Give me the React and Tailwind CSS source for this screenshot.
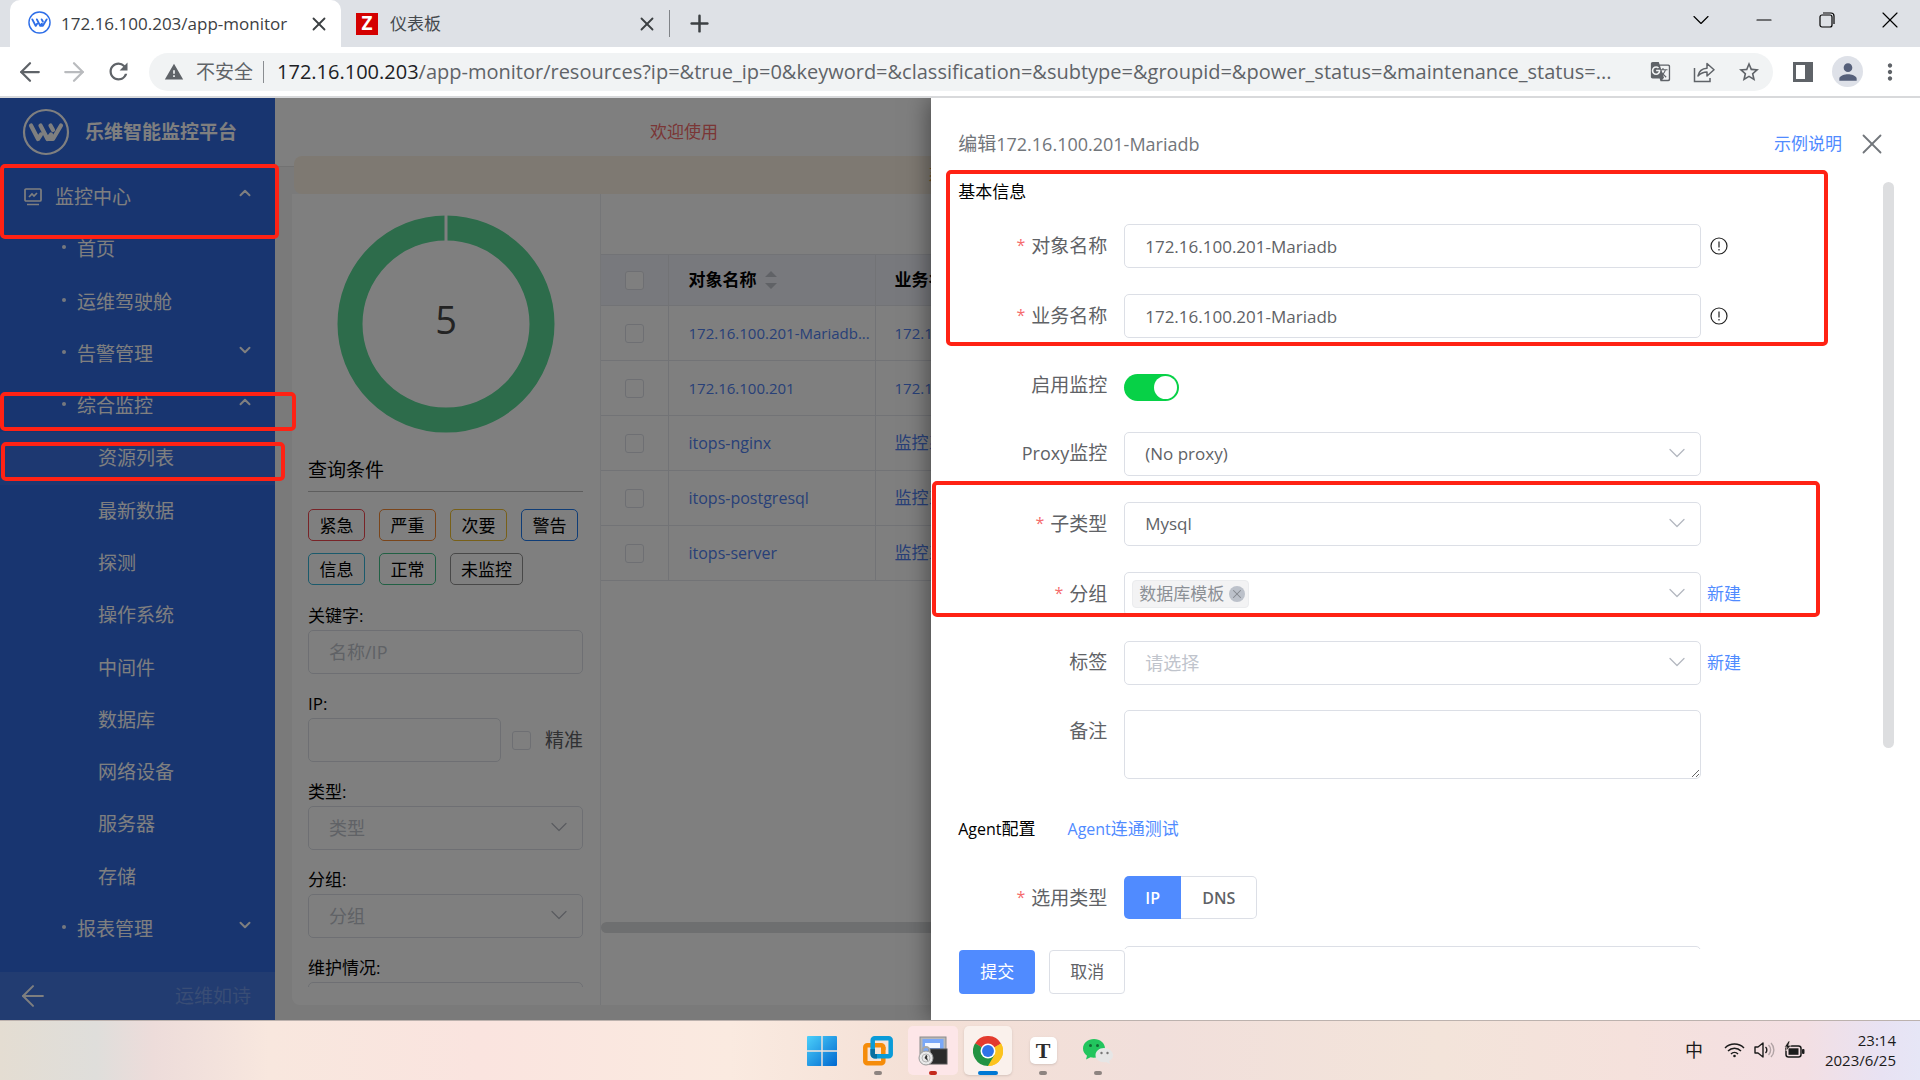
import React from "react";
import { ChevronDown, ChevronUp, X, Plus, ArrowLeft, ArrowRight, Minus } from "lucide-react";
import { MdRefresh, MdWarning, MdStarBorder, MdPerson, MdMoreVert, MdGTranslate } from "react-icons/md";

function LogoMark({ className, ring, stroke }) {
  return (
    <svg viewBox="0 0 48 48" fill="none" stroke="currentColor" className={className} aria-hidden="true">
      <circle cx="24" cy="24" r="22" strokeWidth={ring} />
      <path d="M9 17.500 L16 31 L19 26.500 M18.500 17.500 L25.500 31 L29 26.500 M28.500 17.500 L31 22 M26.500 31 L31 31 L39 17.500" strokeWidth={stroke} strokeLinecap="round" strokeLinejoin="round" />
    </svg>
  );
}

function TabStrip() {
  const win = "flex w-[28px] justify-center";
  return (
    <div className="flex h-[47px] shrink-0 items-stretch bg-[#dee1e6] pl-[10px]">
      <div className="flex w-[331px] items-center rounded-t-[10px] bg-white pl-[18px] pr-[11px]">
        <LogoMark className="mt-[-2px] size-[23px] text-[#2f6fe8]" ring={3} stroke={4} />
        <span className="ml-[10px] flex-1 truncate text-[17px] leading-[24px] text-[#3c4043]">172.16.100.203/app-monitor</span>
        <button aria-label="关闭标签页" className="text-[#3c4043]"><X size={22} strokeWidth={2} /></button>
      </div>
      <div className="flex w-[328px] items-center pl-[15px] pr-[11px]">
        <span className="flex size-[22px] items-center justify-center bg-[#d40000] text-[19px] font-bold leading-none text-white">Z</span>
        <span className="ml-[12px] flex-1 text-[17px] leading-[24px] text-[#45494d]">仪表板</span>
        <button aria-label="关闭标签页" className="text-[#3c4043]"><X size={22} strokeWidth={2} /></button>
      </div>
      <span className="my-[10px] w-px bg-[#808388]" />
      <button aria-label="新标签页" className="ml-[16px] text-[#3c4043]"><Plus size={27} strokeWidth={2.2} /></button>
      <div className="ml-auto mr-[16px] flex items-center gap-[35px] pb-[7px] text-black">
        <button aria-label="搜索标签页" className={win}><ChevronDown size={28} strokeWidth={1} /></button>
        <button aria-label="最小化" className={win}><Minus size={24} strokeWidth={1.200} /></button>
        <button aria-label="还原" className={win}>
          <svg width="18" height="18" viewBox="0 0 18 18" fill="none" stroke="currentColor" strokeWidth="1.2"><rect x="2" y="4" width="12" height="12" rx="2" /><path d="M5 2 H13 a3 3 0 0 1 3 3 V13" /></svg>
        </button>
        <button aria-label="关闭" className={win}><X size={28} strokeWidth={1} /></button>
      </div>
    </div>
  );
}

function Toolbar() {
  return (
    <div className="flex h-[51px] shrink-0 items-center border-b-2 border-[#d8d9db] bg-white pl-[15px] pr-[17px] text-[#5f6368]">
      <button aria-label="后退"><ArrowLeft size={30} strokeWidth={1.800} /></button>
      <button aria-label="前进" className="ml-[14px] text-[#b9bbbe]"><ArrowRight size={30} strokeWidth={1.800} /></button>
      <button aria-label="重新加载" className="ml-[16px]"><MdRefresh size={27} /></button>
      <div className="ml-[17px] flex h-[38px] min-w-0 flex-1 items-center rounded-full bg-[#f1f3f4] pl-[15px] pr-[12px]">
        <MdWarning size={20} className="shrink-0" />
        <span className="ml-[12px] shrink-0 text-[19px] leading-[28px]">不安全</span>
        <span className="ml-[10px] h-[22px] w-px shrink-0 bg-[#8a8d91]" />
        <div className="ml-[13px] min-w-0 flex-1 overflow-hidden whitespace-nowrap text-[20px] leading-[28px]">
          <span className="text-[#202124]">172.16.100.203</span>/app-monitor/resources?ip=&amp;true_ip=0&amp;keyword=&amp;classification=&amp;subtype=&amp;groupid=&amp;power_status=&amp;maintenance_status=...
        </div>
        <div className="ml-[20px] flex shrink-0 items-center gap-[22px]">
          <button aria-label="翻译此页"><MdGTranslate size={21} /></button>
          <button aria-label="共享">
            <svg width="22" height="22" viewBox="0 0 22 22" fill="none" stroke="currentColor" strokeWidth="1.5"><path d="M1.500 7 V20.500 H17 V17" /><path d="M5 15 C6 10 9 7.500 14 7.300 V2.500 L21 8.800 L14 15 V11 C10 11 7.500 12.500 5 15 Z" strokeLinejoin="round" /></svg>
          </button>
          <button aria-label="加入书签"><MdStarBorder size={24} /></button>
        </div>
      </div>
      <button aria-label="侧边栏" className="ml-[20px]">
        <svg width="20" height="20" viewBox="0 0 20 20"><rect width="20" height="20" fill="currentColor" /><rect x="3" y="3" width="9" height="14" fill="#fff" /></svg>
      </button>
      <button aria-label="用户" className="ml-[19px] flex size-[31px] items-center justify-center rounded-full bg-[#dee1e8] text-[#56607a]"><MdPerson size={26} /></button>
      <button aria-label="更多" className="ml-[14px]"><MdMoreVert size={26} /></button>
    </div>
  );
}

const NAV = [
  { t: "首页", l: 1 },
  { t: "运维驾驶舱", l: 1 },
  { t: "告警管理", l: 1, c: "down" },
  { t: "综合监控", l: 1, c: "up" },
  { t: "资源列表", l: 2, active: true },
  { t: "最新数据", l: 2 },
  { t: "探测", l: 2 },
  { t: "操作系统", l: 2 },
  { t: "中间件", l: 2 },
  { t: "数据库", l: 2 },
  { t: "网络设备", l: 2 },
  { t: "服务器", l: 2 },
  { t: "存储", l: 2 },
  { t: "报表管理", l: 1, c: "down" },
];

function Sidebar() {
  return (
    <aside className="flex w-[275px] shrink-0 flex-col bg-[#306ae0] text-white">
      <div className="flex h-[73px] items-center pb-[5px] pl-[22px]">
        <LogoMark className="size-[48px]" ring={2.2} stroke={4.2} />
        <span className="ml-[15px] text-[19px] font-bold leading-[28px]">乐维智能监控平台</span>
      </div>
      <nav className="flex flex-1 flex-col pb-[17px] text-[19px] leading-[28px]">
        <a href="#monitor" className="flex flex-1 items-center pl-[24px] pr-[21px]">
          <svg width="18" height="18" viewBox="0 0 18 18" fill="none" stroke="currentColor" strokeWidth="1.700"><rect x="1" y="1" width="16" height="12" rx="1" /><path d="M5 9 L8 6 L10 8 L13 5 M3 16.500 H15" /></svg>
          <span className="ml-[13px] flex-1">监控中心</span>
          <ChevronUp size={18} strokeWidth={2.600} className="mb-[8px]" />
        </a>
        {NAV.map((n) => (
          <a key={n.t} href={"#" + n.t} className={"flex flex-1 items-center pr-[21px] " + (n.l === 1 ? "pl-[62px]" : "pl-[98px]") + (n.active ? " bg-white/5" : "")}>
            {n.l === 1 && <span className="mb-[4px] mr-[11px] size-[4px] rounded-full bg-white/90" />}
            <span className="flex-1">{n.t}</span>
            {n.c === "up" && <ChevronUp size={18} strokeWidth={2.600} className="mb-[8px]" />}
            {n.c === "down" && <ChevronDown size={18} strokeWidth={2.600} className="mb-[8px]" />}
          </a>
        ))}
      </nav>
      <div className="flex h-[48px] items-center justify-between bg-white/10 pl-[16px] pr-[24px]">
        <button aria-label="收起菜单"><ArrowLeft size={34} strokeWidth={1.400} /></button>
        <span className="text-[19px] leading-[28px] text-white/25">运维如诗</span>
      </div>
    </aside>
  );
}

const LEVELS = [
  ["紧急", "border-[#f04850]"],
  ["严重", "border-[#f58a35]"],
  ["次要", "border-[#f0c030]"],
  ["警告", "border-[#1f7bef]"],
  ["信息", "border-[#35b5d8]"],
  ["正常", "border-[#42c088]"],
  ["未监控", "border-[#909090]"],
];

const FIELD = "h-[44px] w-full appearance-none rounded-[5px] border border-[#dcdfe6] bg-white pl-[20px] pr-[20px] placeholder:text-[#c0c4cc] outline-none";
const TICK = "size-[19px] shrink-0 appearance-none rounded-[3px] border border-[#dcdfe6] bg-white";

const Caret = () => <ChevronDown size={28} strokeWidth={1.100} className="pointer-events-none absolute right-[10px] top-[7px] text-[#b4b8c0]" />;

function FilterSelect({ id, label }) {
  return (
    <div className="mb-[16px]">
      <label htmlFor={id} className="block h-[28px] text-[17px] leading-[28px]">{label}:</label>
      <div className="relative">
        <select id={id} className={FIELD + " text-[18px] text-[#c0c4cc]"}><option>{label}</option></select>
        <Caret />
      </div>
    </div>
  );
}

function FilterPane() {
  return (
    <div className="flex w-[309px] shrink-0 flex-col border-r border-[#ebedf0] pb-[18px] pl-[16px] pr-[17px] text-black">
      <div className="min-h-0 flex-1 overflow-hidden">
        <svg viewBox="0 0 218 218" className="mx-auto mt-[21px] block size-[218px]">
          <circle cx="109" cy="109" r="96" fill="none" stroke="#5ad896" strokeWidth="25" />
          <path d="M109 0 V26" stroke="#fff" strokeWidth="3" />
          <text x="109" y="119" textAnchor="middle" fontSize="38" fill="#464646">5</text>
        </svg>
        <h2 className="mt-[22px] border-b border-[#bcbcbc] pb-[6px] text-[19px] leading-[30px]">查询条件</h2>
        <div className="mt-[17px] flex flex-wrap gap-x-[14px] gap-y-[12px]">
          {LEVELS.map(([t, c]) => (
            <button key={t} className={"h-[32px] min-w-[57px] rounded-[5px] border px-[10px] text-[17px] leading-[29px] " + c}>{t}</button>
          ))}
        </div>
        <div className="mb-[16px] mt-[17px]">
          <label htmlFor="kw" className="block h-[28px] text-[17px] leading-[28px]">关键字:</label>
          <input id="kw" placeholder="名称/IP" className={FIELD + " text-[18px]"} />
        </div>
        <div className="mb-[16px]">
          <label htmlFor="ip" className="block h-[28px] text-[17px] leading-[28px]">IP:</label>
          <div className="flex items-center">
            <input id="ip" className={FIELD + " min-w-0 flex-1"} />
            <input id="exact" type="checkbox" className={TICK + " ml-[11px]"} />
            <label htmlFor="exact" className="ml-[14px] shrink-0 text-[19px] leading-[28px] text-[#606266]">精准</label>
          </div>
        </div>
        <FilterSelect id="type" label="类型" />
        <FilterSelect id="fgroup" label="分组" />
        <FilterSelect id="maint" label="维护情况" />
      </div>
    </div>
  );
}

const ROWS = [
  ["172.16.100.201-Mariadb...", "172.16.100.201"],
  ["172.16.100.201", "172.16.100.201"],
  ["itops-nginx", "监控系统"],
  ["itops-postgresql", "监控系统"],
  ["itops-server", "监控系统"],
];

function ResourceTable() {
  return (
    <div className="flex min-w-0 flex-1 flex-col overflow-hidden pt-[60px]">
      <table className="w-full table-fixed border-collapse text-left">
        <colgroup><col className="w-[67px]" /><col className="w-[207px]" /><col /></colgroup>
        <thead>
          <tr className="h-[51px] border-y border-[#e4e6ec] bg-[#f1f3fb] text-[17px] leading-[24px] text-black">
            <th className="border-r border-[#e4e6ec] pl-[24px]"><input type="checkbox" aria-label="全选" className={TICK + " block"} /></th>
            <th className="border-r border-[#e4e6ec] pl-[20px] font-bold">
              <span className="flex items-center gap-[8px]">对象名称
                <svg width="12" height="20" viewBox="0 0 12 20" fill="#c0c4cc"><path d="M0 7 L6 1 L12 7 Z M0 13 L6 19 L12 13 Z" /></svg>
              </span>
            </th>
            <th className="overflow-hidden whitespace-nowrap pl-[19px] font-bold">业务名称</th>
          </tr>
        </thead>
        <tbody>
          {ROWS.map(([a, b]) => (
            <tr key={a} className="h-[55px] border-b border-[#e4e6ec] font-medium leading-[24px] text-[#5081f0]">
              <td className="border-r border-[#e4e6ec] pl-[24px]"><input type="checkbox" aria-label={a} className={TICK + " block"} /></td>
              <td className={"overflow-hidden whitespace-nowrap border-r border-[#e4e6ec] pl-[20px]" + (b === "监控系统" ? " text-[16px]" : " text-[15px]")}><a href="#r">{a}</a></td>
              <td className={"overflow-hidden whitespace-nowrap pl-[19px]" + (b === "监控系统" ? " text-[17px] font-normal" : " text-[15px]")}><a href="#b">{b}</a></td>
            </tr>
          ))}
        </tbody>
      </table>
      <div className="mb-[72px] mt-auto h-[11px] rounded-full bg-[#dddee0]" />
    </div>
  );
}

function Row({ id, label, required, children, aside, latin }) {
  return (
    <div className="grid grid-cols-[149px_1fr_200px] items-start">
      <label htmlFor={id} className="text-right text-[19px] leading-[43px] text-[#606266]">
        {required && <span className="mr-[6px] align-[2px] text-[16px] text-[#f56c6c]">*</span>}
        {latin && <span className="text-[18px]">{latin}</span>}
        {label}
      </label>
      <div className="relative ml-[17px]">{children}</div>
      <div className="flex h-[44px] items-center">{aside}</div>
    </div>
  );
}

function Info() {
  return (
    <svg width="18" height="18" viewBox="0 0 18 18" fill="none" stroke="#222" strokeWidth="1.200" className="ml-[9px]"><circle cx="9" cy="9" r="8" /><path d="M9 4.500 V10.500 M9 12 V13.500" /></svg>
  );
}

const NewLink = () => <a href="#new" className="ml-[6px] text-[17px] leading-[24px] text-[#508bff]">新建</a>;

function Drawer() {
  const red = "pointer-events-none absolute rounded-[5px] border-4 border-[#ff2214]";
  return (
    <section className="absolute inset-y-0 right-0 flex w-[51.5%] flex-col bg-white shadow-[0_0_24px_rgba(0,0,0,0.5)]">
      <header className="flex h-[72px] shrink-0 items-center pl-[27px] pr-[31px] pt-[20px]">
        <h1 className="text-[19px] leading-[28px] text-[#72767b]">编辑<span className="text-[18px]">172.16.100.201-Mariadb</span></h1>
        <a href="#help" className="ml-auto text-[17px] leading-[28px] text-[#508bff]">示例说明</a>
        <button aria-label="关闭抽屉" className="ml-[13px] text-[#72767b]"><X size={34} strokeWidth={1.300} /></button>
      </header>
      <div className="relative min-h-0 flex-1 overflow-hidden pl-[27px] pr-[19px]">
        <h2 className="mt-[8px] text-[17px] leading-[28px] text-black">基本信息</h2>
        <div className="mt-[18px] flex flex-col gap-[26px]">
          <Row id="oname" label="对象名称" required aside={<Info />}><input id="oname" defaultValue="172.16.100.201-Mariadb" className={FIELD + " text-[17px] text-[#606266]"} /></Row>
          <Row id="bname" label="业务名称" required aside={<Info />}><input id="bname" defaultValue="172.16.100.201-Mariadb" className={FIELD + " text-[17px] text-[#606266]"} /></Row>
          <div className="h-[42px]">
            <Row id="on" label="启用监控">
              <input id="on" type="checkbox" role="switch" defaultChecked className="mt-[10px] block h-[27px] w-[55px] appearance-none rounded-full bg-[#07d147] before:ml-[30px] before:mt-[2px] before:block before:size-[23px] before:rounded-full before:bg-white" />
            </Row>
          </div>
          <Row id="proxy" label="监控" latin="Proxy"><select id="proxy" className={FIELD + " text-[17px] text-[#606266]"}><option>(No proxy)</option></select><Caret /></Row>
          <Row id="sub" label="子类型" required><select id="sub" className={FIELD + " text-[17px] text-[#606266]"}><option>Mysql</option></select><Caret /></Row>
          <div className="flex flex-col gap-[25px]">
            <Row id="grp" label="分组" required aside={<NewLink />}>
              <div id="grp" role="combobox" aria-expanded="false" aria-controls="grp" className="flex h-[44px] items-center rounded-[5px] border border-[#dcdfe6] pl-[7px]">
                <span className="flex h-[28px] items-center gap-[5px] rounded-[4px] border border-[#ebecee] bg-[#f3f3f4] pl-[6px] pr-[3px] text-[17px] leading-[24px] text-[#8c9096]">
                  数据库模板
                  <button aria-label="移除" className="flex size-[16px] items-center justify-center rounded-full bg-[#bcc1ca] text-[#84888e]"><X size={14} strokeWidth={1.800} /></button>
                </span>
              </div>
              <Caret />
            </Row>
            <Row id="tag" label="标签" aside={<NewLink />}><select id="tag" className={FIELD + " text-[18px] text-[#c0c4cc]"}><option>请选择</option></select><Caret /></Row>
            <Row id="memo" label="备注"><textarea id="memo" className="block h-[69px] w-full rounded-[5px] border border-[#dcdfe6] bg-white" /></Row>
          </div>
        </div>
        <div className="mt-[36px] flex gap-[32px] text-[16px] font-medium leading-[28px]">
          <h2 className="text-black">Agent<span className="text-[17px] font-normal">配置</span></h2>
          <a href="#test" className="text-[#508bff]">Agent<span className="text-[17px] font-normal">连通测试</span></a>
        </div>
        <div className="mt-[33px] flex flex-col gap-[26px]">
          <Row id="kind" label="选用类型" required>
            <div id="kind" className="flex h-[43px] text-[16px] font-semibold">
              <button className="w-[57px] rounded-l-[5px] bg-[#508bff] text-white">IP</button>
              <button className="w-[76px] rounded-r-[5px] border border-l-0 border-[#dcdfe6] text-[#606266]">DNS</button>
            </div>
          </Row>
          <Row id="addr"><input id="addr" aria-label="IP" className={FIELD} /></Row>
        </div>
        <div className="absolute right-[26px] top-[12px] h-[566px] w-[11px] rounded-full bg-[#dddee0]" />
      </div>
      <footer className="flex h-[71px] shrink-0 gap-[14px] pl-[28px] pt-px text-[17px]">
        <button className="h-[44px] w-[76px] rounded-[4px] bg-[#508bff] text-white">提交</button>
        <button className="h-[44px] w-[76px] rounded-[4px] border border-[#dcdfe6] text-[#606266]">取消</button>
      </footer>
      <div className={red + " left-[15px] right-[92px] top-[72px] h-[176px]"} />
      <div className={red + " left-px right-[100px] top-[383px] h-[136px]"} />
    </section>
  );
}

function Taskbar() {
  return (
    <footer className="relative flex h-[60px] shrink-0 items-center border-t border-[#bcb2ae] bg-[linear-gradient(90deg,#e4ddd2_0%,#dfdedb_5%,#eddcda_8%,#f8e7de_14%,#fae4df_25%,#faeae0_38%,#f4e0d6_48%,#f1dfdb_60%,#f3e4da_75%,#f5e1dc_85%,#f3dfe3_94%,#e8e2f3_98%,#e6e6f6_100%)]">
      <div className="absolute inset-y-0 left-[798px] flex items-center">
        <TaskIcon label="开始" box="w-[48px]">
          <svg width="30" height="30" viewBox="0 0 30 30"><defs><linearGradient id="win" x1="0" y1="0" x2="1" y2="1"><stop offset="0" stopColor="#4cd0fa" /><stop offset="1" stopColor="#0068d0" /></linearGradient></defs><path fill="url(#win)" d="M0 1a1 1 0 0 1 1-1H14.300V14.300H0Z M15.700 0H29a1 1 0 0 1 1 1V14.300H15.700Z M0 15.700H14.300V30H1a1 1 0 0 1-1-1Z M15.700 15.700H30V29a1 1 0 0 1-1 1H15.700Z" /></svg>
        </TaskIcon>
        <TaskIcon label="VMware" box="ml-[7px] w-[50px]" dot="w-[8px] bg-[#8d8480]">
          <svg width="30" height="30" viewBox="0 0 30 30" fill="none" strokeWidth="4.500"><rect x="2.300" y="9.300" width="18" height="18" rx="2" stroke="#f58c0a" /><rect x="9.700" y="2.300" width="18" height="18" rx="2" stroke="#0a9bd8" /><path d="M9.700 13 V18 a2.300 2.300 0 0 0 2.300 2.300 H14" stroke="#0a6fa0" /><path d="M20.300 11 V14" stroke="#f58c0a" /></svg>
        </TaskIcon>
        <TaskIcon label="终端" box="ml-[5px] w-[50px] bg-[#fde6e8]" dot="w-[8px] bg-[#c42b1c]">
          <svg width="30" height="30" viewBox="0 0 30 30"><rect x="2" y="1" width="26" height="17" fill="#b9b9b9" stroke="#8b8b8b" /><rect x="4.500" y="3" width="21" height="13" fill="#7aa8f8" /><path d="M7 7H22V12H7Z" fill="#f4f8ff" /><rect x="11" y="13" width="18" height="15" fill="#2b2b2b" stroke="#555" /><path d="M4.500 17 V14.500 a3.500 3.500 0 0 1 7 0 V17" fill="none" stroke="#a8a8a8" strokeWidth="2" /><circle cx="8" cy="22" r="7" fill="#e9e9e9" stroke="#9a9a9a" /><circle cx="8" cy="22" r="4" fill="none" stroke="#b5b5b5" /><path d="M8 19 a1.500 1.500 0 0 1 1 2.500 L10 25 L6.500 22 Z" fill="#333" /></svg>
        </TaskIcon>
        <TaskIcon label="Chrome" box="ml-[6px] w-[48px] bg-[#faf1ec] shadow-sm" dot="w-[20px] bg-[#0078d4]">
          <svg width="30" height="30" viewBox="0 0 48 48"><path d="M24 24 L3.200 12 A24 24 0 0 1 44.800 12 Z" fill="#e33b2e" /><path d="M24 24 L44.800 12 A24 24 0 0 1 24 48 Z" fill="#fcc31e" /><path d="M24 24 L24 48 A24 24 0 0 1 3.200 12 Z" fill="#229342" /><path d="M24 12 H44.800 L34.400 18 Z" fill="#e33b2e" /><path d="M34.400 18 L44.800 12 A24 24 0 0 1 24 48 L34.400 30 Z" fill="#fcc31e" /><path d="M13.600 30 L3.200 12 L13.600 18 Z M13.600 30 L24 48 L34.400 30 Z" fill="#229342" /><circle cx="24" cy="24" r="12" fill="#fff" /><circle cx="24" cy="24" r="9.500" fill="#2f73e8" /></svg>
        </TaskIcon>
        <TaskIcon label="Typora" box="ml-[7px] w-[48px]" dot="w-[8px] bg-[#8d8480]">
          <span className="flex size-[27px] items-center justify-center rounded-[5px] bg-white font-['Liberation_Serif'] text-[22px] font-bold leading-none text-[#2d2d2d] shadow">T</span>
        </TaskIcon>
        <TaskIcon label="微信" box="ml-[7px] w-[48px]" dot="w-[8px] bg-[#8d8480]">
          <svg width="30" height="26" viewBox="0 0 30 26"><path d="M11 1 C5 1 0 5 0 10.500 C0 13.500 1.500 16 4 17.800 L3 21.500 L7.500 19.200 C14 21 22 17 22 10.500 C22 5 17 1 11 1Z" fill="#22c55e" /><circle cx="7.500" cy="7.500" r="1.500" fill="#116b33" /><circle cx="14.500" cy="7.500" r="1.500" fill="#116b33" /><path d="M21 10 C16 10 12.500 13.300 12.500 17.300 C12.500 22 17.500 25 23 24 L27 26 L26.200 23 C28.500 21.600 30 19.800 30 17.300 C30 13.300 26 10 21 10Z" fill="#e6e6e6" /><circle cx="18.500" cy="15" r="1.200" fill="#777" /><circle cx="24.500" cy="15" r="1.200" fill="#777" /></svg>
        </TaskIcon>
      </div>
      <div className="ml-auto flex items-center pb-[2px] pr-[24px] text-[#1b1b1b]">
        <span className="text-[18px] leading-[24px]">中</span>
        <svg width="21" height="16" viewBox="0 0 21 16" fill="none" stroke="currentColor" strokeWidth="1.500" className="ml-[21px]"><path d="M1 6 a13.500 13.500 0 0 1 19 0 M4 9 a9 9 0 0 1 13 0 M7 12 a5 5 0 0 1 7 0" /><circle cx="10.500" cy="14" r="1.300" fill="currentColor" stroke="none" /></svg>
        <svg width="21" height="18" viewBox="0 0 21 18" fill="none" stroke="currentColor" strokeWidth="1.400" className="ml-[9px]"><path d="M1 6 H4 L9 2 V16 L4 12 H1 Z" strokeLinejoin="round" /><path d="M11.500 6 a4 4 0 0 1 0 6" /><path d="M14.500 4 a7 7 0 0 1 0 10 M17 2 a10 10 0 0 1 0 14" opacity="0.300" /></svg>
        <svg width="21" height="18" viewBox="0 0 21 18" className="ml-[9px]"><rect x="2" y="5" width="15" height="11" rx="2.500" fill="none" stroke="currentColor" strokeWidth="1.500" /><rect x="4.500" y="7.300" width="10" height="6.500" fill="currentColor" /><rect x="18" y="8" width="2.500" height="5" rx="1" fill="currentColor" /><path d="M4.500 0 L0.500 6 H3 L2 10 L7 4.500 H4.500 L6 0Z" fill="currentColor" stroke="#f5e1dd" strokeWidth="0.600" /></svg>
        <div className="ml-[20px] text-right text-[15px] leading-[20px]"><div>23:14</div><div>2023/6/25</div></div>
      </div>
    </footer>
  );
}

function TaskIcon({ label, box, dot, children }) {
  return (
    <button aria-label={label} className={"relative flex h-[49px] items-center justify-center rounded-[5px] " + box}>
      {children}
      {dot && <span className={"absolute bottom-0 h-[4px] rounded-full " + dot} />}
    </button>
  );
}

export default function App() {
  const red = "pointer-events-none absolute rounded-[5px] border-4 border-[#ff2214]";
  return (
    <div className="flex h-screen flex-col overflow-hidden font-['Open_Sans','Noto_Sans_CJK_SC',sans-serif]">
      <TabStrip />
      <Toolbar />
      <main className="relative flex min-h-0 flex-1 overflow-hidden bg-[#f4f4f4]">
        <Sidebar />
        <div className="flex min-w-0 flex-1 flex-col pb-[15px]">
          <div className="h-[69px] shrink-0 border-b border-[#e4e4e4] bg-white pl-[375px] pt-[20px] text-[17px] leading-[28px] text-[#f56c6c]">欢迎使用</div>
          <div className="relative ml-[19px] mt-[-11px] h-[38px] shrink-0 rounded-l-[8px] bg-[#fdf3e4] pl-[634px] text-[17px] leading-[38px] text-[#e6a23c]">系统</div>
          <div className="ml-[17px] flex min-h-0 flex-1 rounded-bl-[8px] bg-white">
            <FilterPane />
            <ResourceTable />
          </div>
        </div>
        <div className="absolute inset-0 bg-black/50" />
        <Drawer />
        <div className={red + " left-0 top-[66px] h-[75px] w-[279px]"} />
        <div className={red + " left-0 top-[294px] h-[39px] w-[296px]"} />
        <div className={red + " left-px top-[344px] h-[39px] w-[284px]"} />
      </main>
      <Taskbar />
    </div>
  );
}
